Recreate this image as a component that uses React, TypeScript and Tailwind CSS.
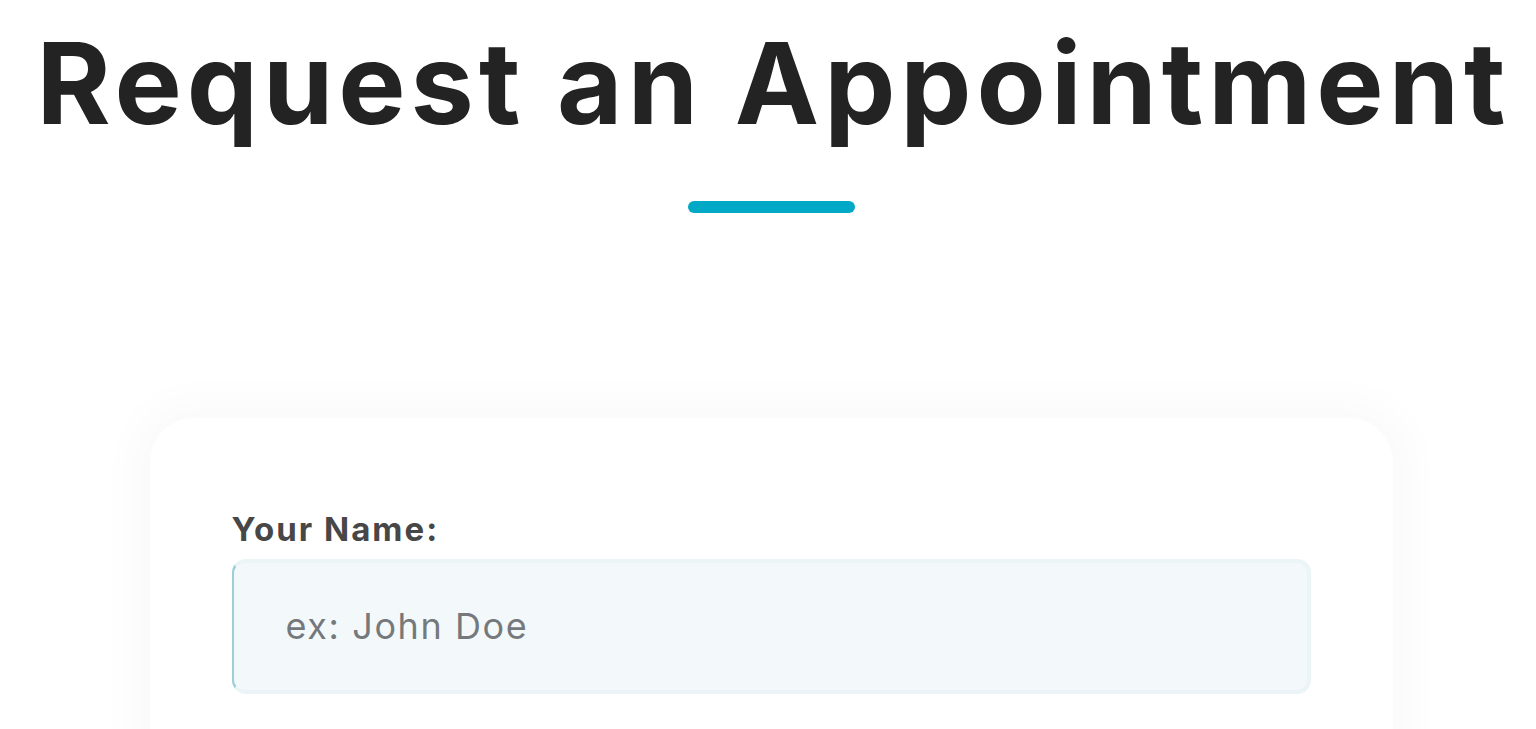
export default function App() {
  return (
    <div className="min-h-[729px] overflow-hidden bg-white pl-[6px] font-['Inter',sans-serif]">
      <div className="flex flex-col items-center">
        <h1 className="mt-[19px] pl-[5px] text-[113px] font-bold leading-[1.15] tracking-[5px] text-[#232323]">
          Request an Appointment
        </h1>
        <div className="mt-[52px] h-[12px] w-[167px] rounded-full bg-[#01a9c6]" />

        <div className="mt-[205px] w-[1243px] rounded-t-[44px] bg-white px-[82px] pt-[91px] pb-[60px] shadow-[0_0_40px_18px_rgba(0,0,0,0.025)]">
          <label className="block text-[33px] font-bold leading-[40px] tracking-[2px] text-[#474747]">
            Your Name:
          </label>
          <div className="mt-[10px] flex h-[135px] items-center rounded-[14px] border-4 border-[#ebf4f6] border-l-2 border-l-[#9acfd9] bg-[#f3f9fb] pl-[52px]">
            <span className="text-[36px] tracking-[1.6px] text-[#76797b]">ex: John Doe</span>
          </div>
        </div>
      </div>
    </div>
  )
}
